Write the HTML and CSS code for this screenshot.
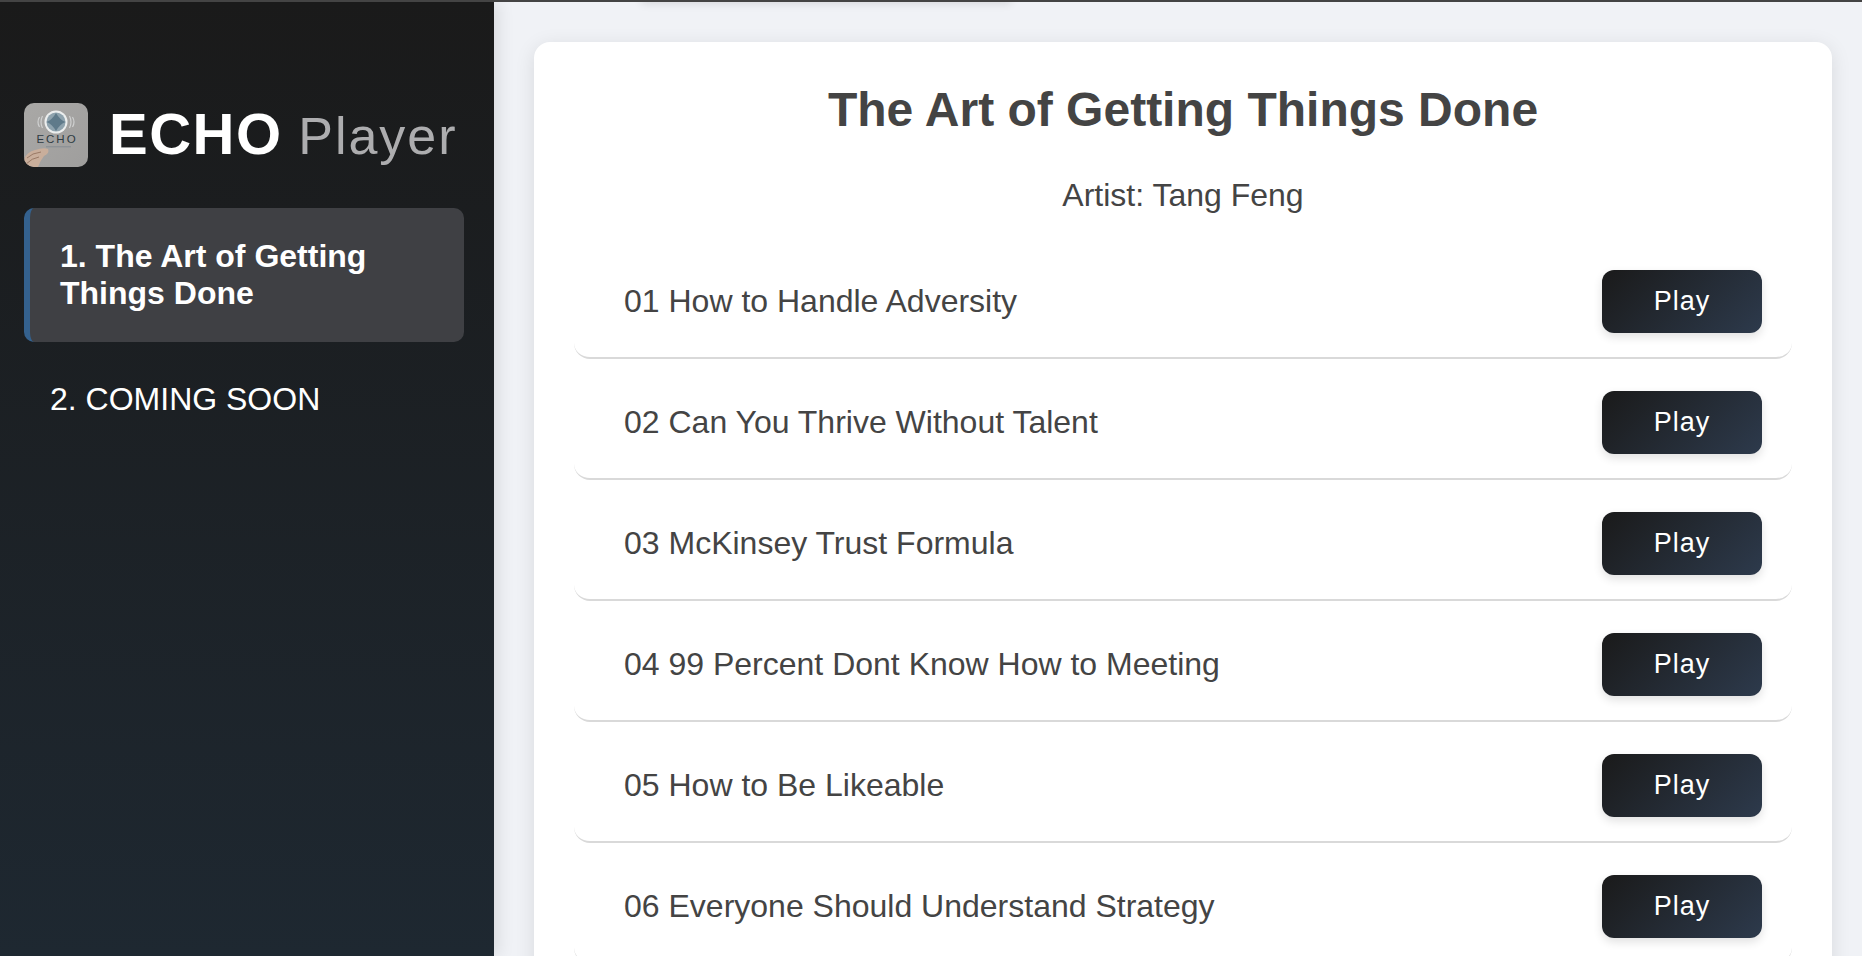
FILE: index.html
```html
<!DOCTYPE html>
<html lang="en">
<head>
    <meta charset="UTF-8">
    <meta name="viewport" content="width=device-width, initial-scale=1.0">
    <title>ECHO Player</title>
    <link rel="stylesheet" href="styles.css">
</head>
<body>
    <div class="top-line"></div>
    <div class="layout">
        <aside class="sidebar">
            <div class="brand">
                <svg class="brand-logo" viewBox="0 0 64 64" aria-hidden="true">
                    <defs>
                        <clipPath id="logo-clip"><rect width="64" height="64" rx="10"/></clipPath>
                        <linearGradient id="logo-bg" x1="0" y1="0" x2="1" y2="1">
                            <stop offset="0" stop-color="#a9a8a6"/>
                            <stop offset="1" stop-color="#9f9e9d"/>
                        </linearGradient>
                    </defs>
                    <g clip-path="url(#logo-clip)">
                        <rect width="64" height="64" fill="url(#logo-bg)"/>
                        <circle cx="32" cy="19" r="11.5" fill="#eceeee"/>
                        <circle cx="32" cy="19" r="9.5" fill="#8fa3ae"/>
                        <path d="M22.5 19Q28 17 32 10Q36 17 41.5 19Q36 21 32 28Q28 21 22.5 19Z" fill="#5f7a8a"/>
                        <path d="M18.5 13Q15.5 19 18.5 25M15.5 14Q12.5 19 15.5 24M45.5 13Q48.5 19 45.5 25M48.5 14Q51.5 19 48.5 24" fill="none" stroke="#cfd0d0" stroke-width="1.2"/>
                        <text x="33" y="40" text-anchor="middle" class="logo-word">ECHO</text>
                        <rect x="22" y="43" width="25" height="1.4" fill="#848c91" opacity=".7"/>
                        <path d="M0 56Q3 49 11 47Q20 44 24 46Q26 50 20 53Q16 58 14 64H0Z" fill="#c9ae9b"/>
                        <path d="M3 55Q8 50 17 49M2 61Q8 55 15 54" fill="none" stroke="#9a7a66" stroke-width="1"/>
                    </g>
                </svg>
                <div class="brand-name"><strong>ECHO</strong> <span>Player</span></div>
            </div>
            <nav class="book-list">
                <a class="book-item active">1. The Art of Getting Things Done</a>
                <a class="book-item">2. COMING SOON</a>
            </nav>
        </aside>
        <main class="content">
            <div class="top-peek"></div>
            <section class="card">
                <h1>The Art of Getting Things Done</h1>
                <p class="artist">Artist: Tang Feng</p>
                <ul class="tracks">
                    <li class="track"><span>01 How to Handle Adversity</span><button class="play-btn">Play</button></li>
                    <li class="track"><span>02 Can You Thrive Without Talent</span><button class="play-btn">Play</button></li>
                    <li class="track"><span>03 McKinsey Trust Formula</span><button class="play-btn">Play</button></li>
                    <li class="track"><span>04 99 Percent Dont Know How to Meeting</span><button class="play-btn">Play</button></li>
                    <li class="track"><span>05 How to Be Likeable</span><button class="play-btn">Play</button></li>
                    <li class="track"><span>06 Everyone Should Understand Strategy</span><button class="play-btn">Play</button></li>
                </ul>
            </section>
        </main>
    </div>
</body>
</html>
```

FILE: styles.css
```css
* {
    margin: 0;
    padding: 0;
    box-sizing: border-box;
}

body {
    font-family: "Liberation Sans", Arial, sans-serif;
    background-color: #f0f2f6;
    height: 100vh;
    overflow: hidden;
    display: flex;
    flex-direction: column;
}

.top-line {
    position: relative;
    z-index: 2;
    height: 2px;
    flex-shrink: 0;
    background-color: #444;
}

.layout {
    display: flex;
    flex: 1;
    min-height: 0;
}

.sidebar {
    width: 494px;
    flex-shrink: 0;
    padding: 100px 30px 0 24px;
    background: linear-gradient(180deg, #1a1a1a, #1e2831);
    box-shadow: 4px 0 16px rgba(0, 0, 0, 0.1);
    color: #fff;
    z-index: 1;
}

.brand {
    display: flex;
    align-items: center;
    gap: 21px;
    margin-bottom: 40px;
}

.brand-logo {
    width: 64px;
    height: 64px;
    flex-shrink: 0;
}

.logo-word {
    font-family: "Liberation Sans", Arial, sans-serif;
    font-size: 11.5px;
    letter-spacing: 2px;
    fill: #2f3b42;
}

.brand-name {
    font-size: 58px;
    line-height: 64px;
    white-space: nowrap;
    letter-spacing: 1.5px;
}

.brand-name strong {
    font-weight: 700;
}

.brand-name span {
    font-size: 52px;
    margin-left: -2px;
    letter-spacing: 2px;
    color: #adadaf;
}

.book-list {
    display: flex;
    flex-direction: column;
    gap: 26px;
}

.book-item {
    display: block;
    padding: 13px 26px;
    font-size: 32px;
    line-height: 37px;
}

.book-item.active {
    padding: 30px 31px 30px 30px;
    background-color: #3f4044;
    border-left: 6px solid #34618e;
    border-radius: 10px;
    font-weight: 700;
}

.content {
    position: relative;
    flex: 1;
    min-width: 0;
    padding: 40px 30px 0 40px;
}

.top-peek {
    position: absolute;
    top: -10px;
    left: 147px;
    width: 370px;
    height: 10px;
    background-color: #f0f2f6;
    box-shadow: 0 2px 8px rgba(0, 0, 0, 0.1);
}

.card {
    background-color: #fff;
    border-radius: 16px;
    box-shadow: 0 4px 20px rgba(0, 0, 0, 0.1);
    padding: 39px 40px 40px 40px;
    min-height: 1000px;
}

.card h1 {
    font-size: 48px;
    line-height: 58px;
    font-weight: 700;
    color: #444;
    text-align: center;
}

.artist {
    margin-top: 38px;
    font-size: 32px;
    line-height: 37px;
    color: #444;
    text-align: center;
}

.tracks {
    list-style: none;
    margin-top: 32px;
}

.track {
    display: flex;
    align-items: center;
    justify-content: space-between;
    padding: 24px 30px 24px 50px;
    margin-bottom: 8px;
    border-bottom: 2px solid #d9d9d9;
    border-radius: 16px;
    font-size: 32px;
    color: #444;
}

.play-btn {
    width: 160px;
    height: 63px;
    border: none;
    border-radius: 12px;
    background: linear-gradient(135deg, #1a1a1a, #2d3a4c);
    box-shadow: 0 4px 10px rgba(0, 0, 0, 0.12);
    color: #fff;
    font-family: inherit;
    font-size: 27px;
    letter-spacing: 1px;
    cursor: pointer;
}
```
